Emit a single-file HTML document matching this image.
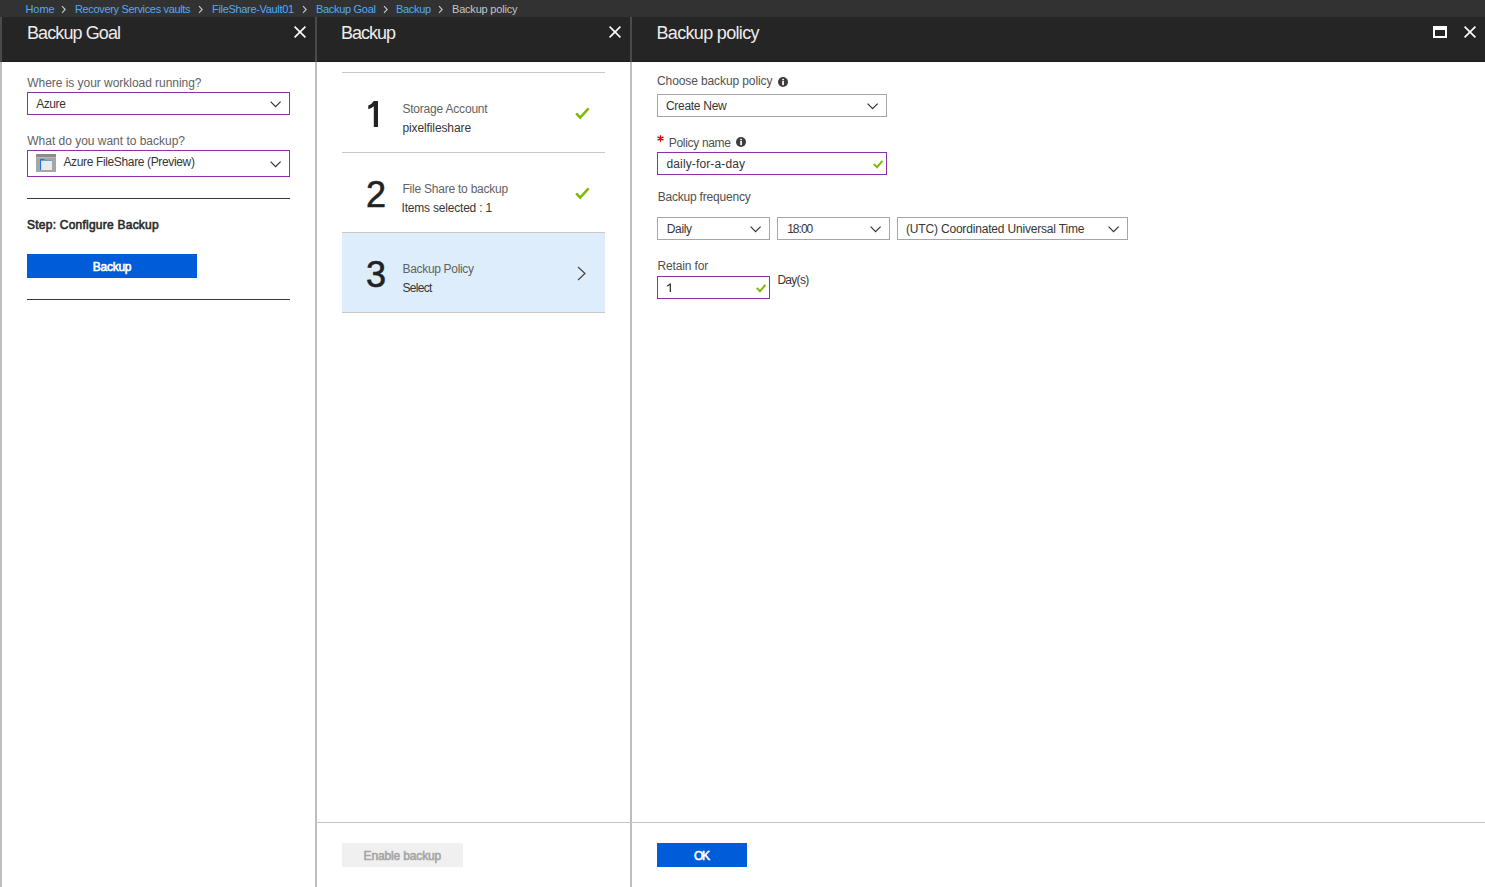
<!DOCTYPE html>
<html><head><meta charset="utf-8"><style>
*{margin:0;padding:0;box-sizing:border-box}
html,body{width:1485px;height:887px;overflow:hidden;background:#fff;font-family:"Liberation Sans", sans-serif}
.a{position:absolute}
.t{position:absolute;white-space:nowrap;line-height:1em}
.ic{position:absolute;overflow:visible}
</style></head><body>
<div class="a" style="left:0;top:0;width:1485px;height:17px;background:#323232"></div>
<!-- headers -->
<div class="a" style="left:0;top:17px;width:1485px;height:45px;background:#252525"></div>
<div class="a" style="left:0;top:61px;width:1485px;height:1px;background:#1c1c1c"></div>
<!-- panel borders -->
<div class="a" style="left:0;top:17px;width:2px;height:45px;background:#4a4a4a"></div>
<div class="a" style="left:0;top:62px;width:2px;height:825px;background:#bebebe"></div>
<div class="a" style="left:315px;top:17px;width:2px;height:45px;background:#4a4a4a"></div>
<div class="a" style="left:315px;top:62px;width:2px;height:825px;background:#bebebe"></div>
<div class="a" style="left:630px;top:17px;width:2px;height:45px;background:#4a4a4a"></div>
<div class="a" style="left:630px;top:62px;width:2px;height:825px;background:#bebebe"></div>
<!-- panel1 -->
<div class="a" style="left:27px;top:92px;width:263px;height:23px;border:1px solid #8a30a8"></div>
<div class="a" style="left:27px;top:150px;width:263px;height:27px;border:1px solid #8a30a8"></div>
<svg class="ic" style="left:36px;top:154px" width="20" height="18"><rect x="0" y="0" width="20" height="18" fill="#a6a6a6"/><rect x="0" y="0" width="20" height="3" fill="#8c8c8c"/><rect x="0" y="3" width="20" height="1" fill="#bcbcbc"/><rect x="4" y="5" width="1.2" height="11" fill="#1d7ad6"/><rect x="4" y="5" width="4.5" height="1.2" fill="#1d7ad6"/><rect x="8.5" y="6" width="7.5" height="1" fill="#5d9fdb"/><rect x="5.2" y="7" width="10.8" height="9" fill="#ebebeb"/></svg>
<div class="a" style="left:27px;top:198px;width:263px;height:1px;background:#3a3a3a"></div>
<div class="a" style="left:27px;top:254px;width:170px;height:24px;background:#015cda"></div>
<div class="a" style="left:27px;top:299px;width:263px;height:1px;background:#3a3a3a"></div>
<!-- panel2 -->
<div class="a" style="left:342px;top:72px;width:263px;height:1px;background:#c8c8c8"></div>
<div class="a" style="left:342px;top:152px;width:263px;height:1px;background:#c8c8c8"></div>
<div class="a" style="left:342px;top:233px;width:263px;height:79px;background:#ddedfc"></div>
<div class="a" style="left:342px;top:232px;width:263px;height:1px;background:#c8c8c8"></div>
<div class="a" style="left:342px;top:312px;width:263px;height:1px;background:#c8c8c8"></div>
<div class="a" style="left:317px;top:822px;width:1168px;height:1px;background:#c4c4c4"></div>
<div class="a" style="left:342px;top:843px;width:121px;height:24px;background:#f0f0f0"></div>
<!-- panel3 -->
<div class="a" style="left:657px;top:94px;width:230px;height:23px;border:1px solid #a6a6a6"></div>
<div class="a" style="left:657px;top:152px;width:230px;height:23px;border:1px solid #8a30a8"></div>
<div class="a" style="left:657px;top:217px;width:113px;height:23px;border:1px solid #a6a6a6"></div>
<div class="a" style="left:777px;top:217px;width:113px;height:23px;border:1px solid #a6a6a6"></div>
<div class="a" style="left:897px;top:217px;width:231px;height:23px;border:1px solid #a6a6a6"></div>
<div class="a" style="left:657px;top:276px;width:113px;height:23px;border:1px solid #8a30a8"></div>
<div class="a" style="left:657px;top:843px;width:90px;height:24px;background:#015cda"></div>
<!-- maximize -->
<div class="a" style="left:1433px;top:26px;width:14px;height:12px;border:2px solid #fff;border-top-width:4px"></div>
<!-- numerals -->
<svg class="ic" style="left:368px;top:101px" width="11" height="26"><path d="M5.8,0 H10 V26 H5.8 V5.2 Q3.5,7 0.3,8.3 V4.6 Q4,3 5.8,0 Z" fill="#222"/></svg>
<div class="t" style="left:366px;top:177px;font-size:36px;color:#222;-webkit-text-stroke:0.6px #222">2</div>
<div class="t" style="left:366px;top:257px;font-size:36px;color:#222;-webkit-text-stroke:0.6px #222">3</div>
<svg class="ic" style="left:577px;top:266px" width="10" height="15"><polyline points="1,1 8,7.5 1,14" fill="none" stroke="#444" stroke-width="1.2"/></svg>
<svg class="ic" style="left:61px;top:5px" width="6" height="9"><polyline points="1,1.2 4.2,4.5 1,7.8" fill="none" stroke="#c8c8c8" stroke-width="1.1"/></svg>
<svg class="ic" style="left:198px;top:5px" width="6" height="9"><polyline points="1,1.2 4.2,4.5 1,7.8" fill="none" stroke="#c8c8c8" stroke-width="1.1"/></svg>
<svg class="ic" style="left:302px;top:5px" width="6" height="9"><polyline points="1,1.2 4.2,4.5 1,7.8" fill="none" stroke="#c8c8c8" stroke-width="1.1"/></svg>
<svg class="ic" style="left:383px;top:5px" width="6" height="9"><polyline points="1,1.2 4.2,4.5 1,7.8" fill="none" stroke="#c8c8c8" stroke-width="1.1"/></svg>
<svg class="ic" style="left:437.5px;top:5px" width="6" height="9"><polyline points="1,1.2 4.2,4.5 1,7.8" fill="none" stroke="#c8c8c8" stroke-width="1.1"/></svg>
<svg class="ic" style="left:294px;top:26px" width="12" height="12"><path d="M0.6,0.6 L11.4,11.4 M11.4,0.6 L0.6,11.4" stroke="#fff" stroke-width="1.6"/></svg>
<svg class="ic" style="left:609px;top:26px" width="12" height="12"><path d="M0.6,0.6 L11.4,11.4 M11.4,0.6 L0.6,11.4" stroke="#fff" stroke-width="1.6"/></svg>
<svg class="ic" style="left:1464px;top:26px" width="12" height="12"><path d="M0.6,0.6 L11.4,11.4 M11.4,0.6 L0.6,11.4" stroke="#fff" stroke-width="1.6"/></svg>
<svg class="ic" style="left:270.3px;top:101.3px" width="12" height="7"><polyline points="0.6,0.6 5.6,5.6 10.6,0.6" fill="none" stroke="#333" stroke-width="1.2"/></svg>
<svg class="ic" style="left:270.3px;top:161.3px" width="12" height="7"><polyline points="0.6,0.6 5.6,5.6 10.6,0.6" fill="none" stroke="#333" stroke-width="1.2"/></svg>
<svg class="ic" style="left:867.3px;top:103.3px" width="12" height="7"><polyline points="0.6,0.6 5.6,5.6 10.6,0.6" fill="none" stroke="#333" stroke-width="1.2"/></svg>
<svg class="ic" style="left:750.3px;top:226.3px" width="12" height="7"><polyline points="0.6,0.6 5.6,5.6 10.6,0.6" fill="none" stroke="#333" stroke-width="1.2"/></svg>
<svg class="ic" style="left:870.3px;top:226.3px" width="12" height="7"><polyline points="0.6,0.6 5.6,5.6 10.6,0.6" fill="none" stroke="#333" stroke-width="1.2"/></svg>
<svg class="ic" style="left:1107.8px;top:226.3px" width="12" height="7"><polyline points="0.6,0.6 5.6,5.6 10.6,0.6" fill="none" stroke="#333" stroke-width="1.2"/></svg>
<svg class="ic" style="left:574.5px;top:106.5px" width="15" height="13"><polyline points="1.2,6.3 5.2,10.7 13.6,1.3" fill="none" stroke="#7fba00" stroke-width="2.5"/></svg>
<svg class="ic" style="left:574.5px;top:186.5px" width="15" height="13"><polyline points="1.2,6.3 5.2,10.7 13.6,1.3" fill="none" stroke="#7fba00" stroke-width="2.5"/></svg>
<svg class="ic" style="left:873px;top:160px" width="11" height="9"><polyline points="0.8,3.9 4.0,7.2 9.4,0.8" fill="none" stroke="#7fba00" stroke-width="2"/></svg>
<svg class="ic" style="left:756px;top:284px" width="11" height="9"><polyline points="0.8,3.9 4.0,7.2 9.4,0.8" fill="none" stroke="#7fba00" stroke-width="2"/></svg>
<svg class="ic" style="left:778px;top:77px" width="10" height="10"><circle cx="5" cy="5" r="5" fill="#3c3c3c"/><rect x="4.2" y="4" width="1.7" height="4.2" fill="#fff"/><rect x="4.2" y="1.8" width="1.7" height="1.5" fill="#fff"/></svg>
<svg class="ic" style="left:736px;top:137px" width="10" height="10"><circle cx="5" cy="5" r="5" fill="#3c3c3c"/><rect x="4.2" y="4" width="1.7" height="4.2" fill="#fff"/><rect x="4.2" y="1.8" width="1.7" height="1.5" fill="#fff"/></svg>
<svg class="ic" style="left:666px;top:283px" width="6" height="10"><path d="M3.7,0.6 H5 V9 H3.7 V2.3 Q2.6,3.2 0.9,3.8 V2.6 Q2.8,1.8 3.7,0.6 Z" fill="#363636"/></svg>
<svg class="ic" style="left:657px;top:135px" width="7" height="7"><path d="M3.5,0.3 V6.7 M0.5,1.9 L6.5,5.1 M6.5,1.9 L0.5,5.1" stroke="#e5001a" stroke-width="1.4"/></svg>
<div class="t" style="left:25.50px;top:4.00px;font-size:11px;font-weight:400;color:#52aaf4;letter-spacing:-0.075px">Home</div>
<div class="t" style="left:75.00px;top:4.00px;font-size:11px;font-weight:400;color:#52aaf4;letter-spacing:-0.347px">Recovery Services vaults</div>
<div class="t" style="left:212.00px;top:4.00px;font-size:11px;font-weight:400;color:#52aaf4;letter-spacing:-0.320px">FileShare-Vault01</div>
<div class="t" style="left:316.00px;top:4.00px;font-size:11px;font-weight:400;color:#52aaf4;letter-spacing:-0.304px">Backup Goal</div>
<div class="t" style="left:396.00px;top:4.00px;font-size:11px;font-weight:400;color:#52aaf4;letter-spacing:-0.314px">Backup</div>
<div class="t" style="left:452.00px;top:4.00px;font-size:11px;font-weight:400;color:#c4c4c4;letter-spacing:-0.197px">Backup policy</div>
<div class="t" style="left:27.00px;top:24.00px;font-size:18px;font-weight:400;color:#ececec;letter-spacing:-0.906px">Backup Goal</div>
<div class="t" style="left:341.00px;top:24.00px;font-size:18px;font-weight:400;color:#ececec;letter-spacing:-1.005px">Backup</div>
<div class="t" style="left:656.50px;top:24.00px;font-size:18px;font-weight:400;color:#ececec;letter-spacing:-0.672px">Backup policy</div>
<div class="t" style="left:27.30px;top:77.00px;font-size:12px;font-weight:400;color:#626262;letter-spacing:-0.041px">Where is your workload running?</div>
<div class="t" style="left:36.20px;top:98.00px;font-size:12px;font-weight:400;color:#363636;letter-spacing:-0.418px">Azure</div>
<div class="t" style="left:27.30px;top:135.00px;font-size:12px;font-weight:400;color:#626262;letter-spacing:-0.016px">What do you want to backup?</div>
<div class="t" style="left:63.40px;top:156.00px;font-size:12px;font-weight:400;color:#363636;letter-spacing:-0.356px">Azure FileShare (Preview)</div>
<div class="t" style="left:27.00px;top:219.00px;font-size:12px;font-weight:400;color:#2c2c2c;letter-spacing:0.235px;-webkit-text-stroke:0.6px #2c2c2c">Step: Configure Backup</div>
<div class="t" style="left:92.80px;top:261.00px;font-size:12px;font-weight:400;color:#ffffff;letter-spacing:-0.270px;-webkit-text-stroke:0.6px #ffffff">Backup</div>
<div class="t" style="left:402.40px;top:103.00px;font-size:12px;font-weight:400;color:#626262;letter-spacing:-0.199px">Storage Account</div>
<div class="t" style="left:402.40px;top:122.00px;font-size:12px;font-weight:400;color:#363636;letter-spacing:-0.105px">pixelfileshare</div>
<div class="t" style="left:402.50px;top:183.00px;font-size:12px;font-weight:400;color:#626262;letter-spacing:-0.231px">File Share to backup</div>
<div class="t" style="left:401.50px;top:202.00px;font-size:12px;font-weight:400;color:#363636;letter-spacing:-0.198px">Items selected : 1</div>
<div class="t" style="left:402.50px;top:263.00px;font-size:12px;font-weight:400;color:#626262;letter-spacing:-0.322px">Backup Policy</div>
<div class="t" style="left:402.50px;top:282.00px;font-size:12px;font-weight:400;color:#363636;letter-spacing:-0.704px">Select</div>
<div class="t" style="left:363.60px;top:850.00px;font-size:12px;font-weight:400;color:#a6a6a6;letter-spacing:-0.143px;-webkit-text-stroke:0.6px #a6a6a6">Enable backup</div>
<div class="t" style="left:657.00px;top:75.00px;font-size:12px;font-weight:400;color:#505050;letter-spacing:-0.105px">Choose backup policy</div>
<div class="t" style="left:666.00px;top:100.00px;font-size:12px;font-weight:400;color:#363636;letter-spacing:-0.299px">Create New</div>
<div class="t" style="left:668.80px;top:137.00px;font-size:12px;font-weight:400;color:#505050;letter-spacing:-0.319px">Policy name</div>
<div class="t" style="left:666.50px;top:158.00px;font-size:12px;font-weight:400;color:#363636;letter-spacing:0.129px">daily-for-a-day</div>
<div class="t" style="left:657.70px;top:191.00px;font-size:12px;font-weight:400;color:#505050;letter-spacing:-0.204px">Backup frequency</div>
<div class="t" style="left:666.80px;top:223.00px;font-size:12px;font-weight:400;color:#363636;letter-spacing:-0.368px">Daily</div>
<div class="t" style="left:787.20px;top:223.00px;font-size:12px;font-weight:400;color:#363636;letter-spacing:-0.989px">18:00</div>
<div class="t" style="left:906.00px;top:223.00px;font-size:12px;font-weight:400;color:#363636;letter-spacing:-0.181px">(UTC) Coordinated Universal Time</div>
<div class="t" style="left:657.60px;top:260.00px;font-size:12px;font-weight:400;color:#505050;letter-spacing:-0.159px">Retain for</div>
<div class="t" style="left:777.40px;top:274.00px;font-size:12px;font-weight:400;color:#363636;letter-spacing:-0.707px">Day(s)</div>
<div class="t" style="left:694.00px;top:850.00px;font-size:12px;font-weight:400;color:#ffffff;letter-spacing:-1.334px;-webkit-text-stroke:0.6px #ffffff">OK</div>
</body></html>
